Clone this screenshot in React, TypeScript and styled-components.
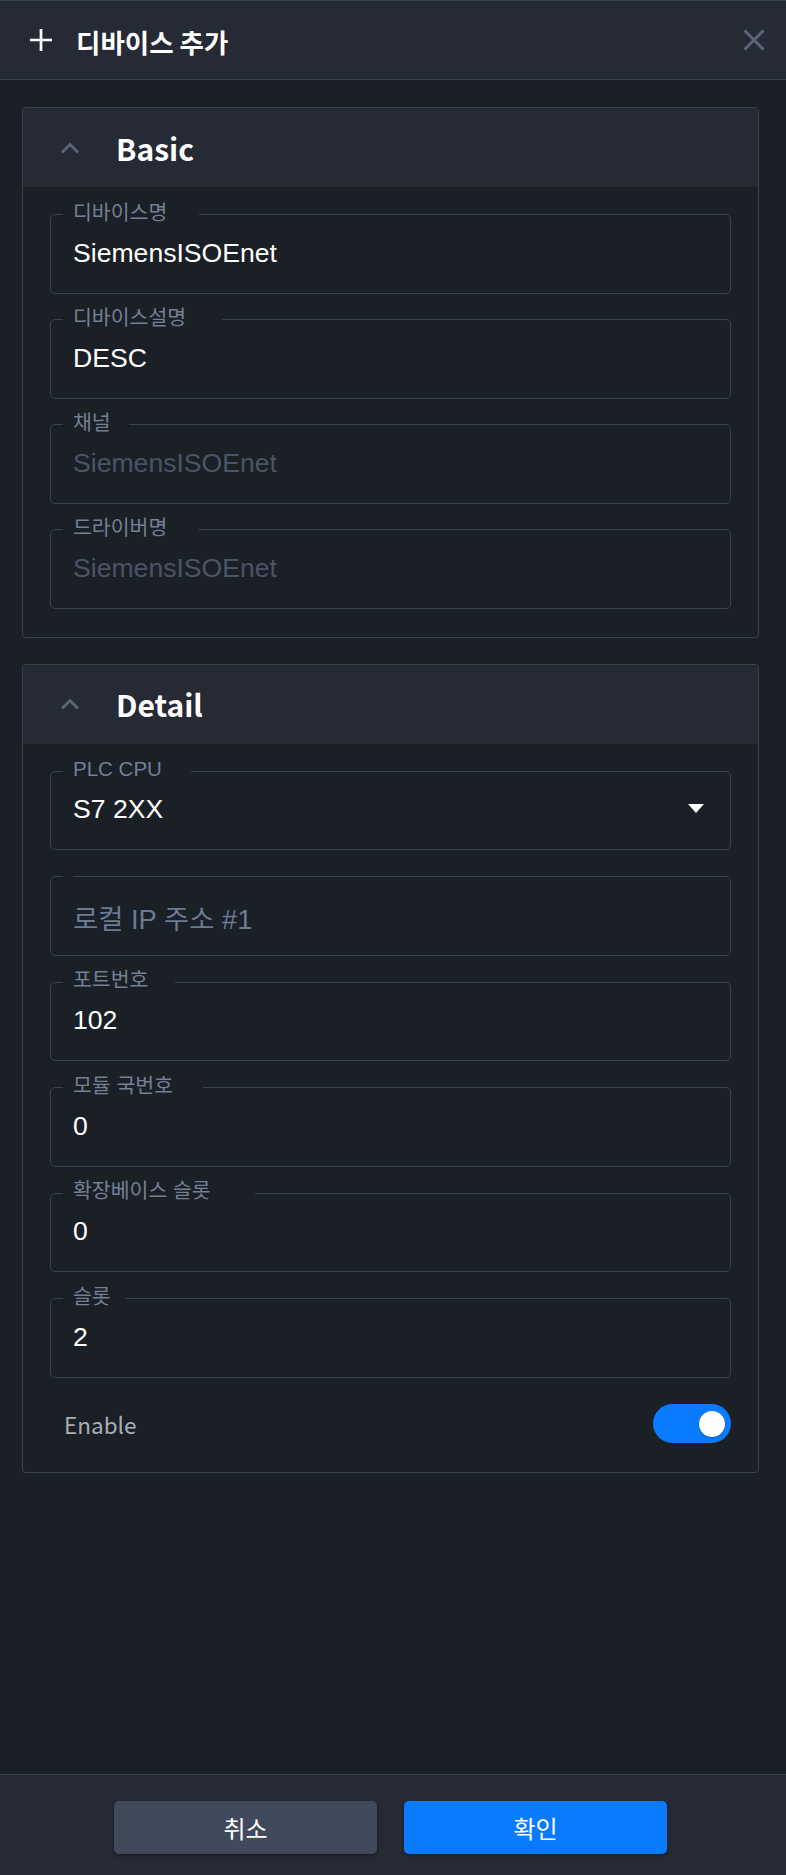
import React from "react";
import styled, { createGlobalStyle } from "styled-components";

const GlobalStyle = createGlobalStyle`
  *, *::before, *::after { box-sizing: border-box; }
  html, body { margin: 0; padding: 0; background: #1b1f26; }
  body { font-family: "Liberation Sans", "Noto Sans CJK KR", sans-serif; }
`;

const Page = styled.div`
  display: flex;
  flex-direction: column;
  min-height: 1875px;
  background: #1b1f26;
`;

const Header = styled.header`
  height: 80px;
  display: flex;
  align-items: center;
  padding: 0 21px 0 30px;
  background: #252a34;
  border-top: 1px solid #3a4150;
  border-bottom: 1px solid #3a4150;
`;

const Title = styled.h1`
  flex: 1;
  margin: 0 0 0 24px;
  font-family: "Noto Sans CJK KR", sans-serif;
  font-size: 26.5px;
  font-weight: 700;
  color: #ffffff;
  line-height: 30px;
  padding-top: 3px;
`;

const IconButton = styled.button`
  display: flex;
  padding: 0;
  border: 0;
  background: transparent;
  color: #5b667a;
  cursor: pointer;
`;

const Main = styled.main`
  flex: 1;
  display: flex;
  flex-direction: column;
  gap: 26px;
  padding: 27px 27px 27px 22px;
`;

const Card = styled.section`
  border: 1px solid #3a4150;
  border-radius: 4px;
  overflow: hidden;
`;

const CardHeader = styled.div`
  height: 79px;
  display: flex;
  align-items: center;
  padding-left: 37px;
  background: #252a34;
`;

const CardTitle = styled.h2`
  margin: 0 0 0 36px;
  font-family: "Noto Sans CJK KR", sans-serif;
  font-size: 30px;
  font-weight: 700;
  color: #ffffff;
  line-height: 36px;
`;

const CardBody = styled.div<{ $gap: number }>`
  display: flex;
  flex-direction: column;
  gap: ${(p) => p.$gap}px;
  padding: 15.5px 27px 28px 27px;
`;

const Field = styled.fieldset`
  margin: 0;
  padding: 0;
  min-width: 0;
  border: 1px solid #3a4150;
  border-radius: 5px;
`;

const Legend = styled.legend<{ $notch: number }>`
  height: 24px;
  margin-left: 12px;
  padding: 0 ${(p) => p.$notch}px 5px 10px;
  font-size: 20.5px;
  line-height: 19px;
  color: #738095;
  white-space: nowrap;
`;

const Value = styled.div<{ $tone: "value" | "disabled" | "placeholder" }>`
  height: 66px;
  display: flex;
  align-items: flex-start;
  justify-content: space-between;
  padding: ${(p) => (p.$tone === "placeholder" ? "16px" : "11px")} 26px 0 22px;
  font-size: ${(p) => (p.$tone === "placeholder" ? "27.4px" : "26.6px")};
  line-height: 30px;
  color: ${(p) =>
    p.$tone === "value" ? "#ffffff" : p.$tone === "disabled" ? "#4a5466" : "#6a7b93"};
`;

const Caret = styled.svg`
  margin-top: 10px;
  flex: none;
`;

const ToggleRow = styled.div`
  height: 40px;
  margin-top: 11.5px;
  display: flex;
  align-items: center;
  justify-content: space-between;
  padding-left: 14px;
`;

const ToggleLabel = styled.span`
  font-family: "Noto Sans CJK KR", sans-serif;
  font-size: 22.5px;
  font-weight: 400;
  color: #a9aeb6;
`;

const Switch = styled.button<{ $on: boolean }>`
  width: 78px;
  height: 39px;
  padding: 0 6px;
  border: 0;
  border-radius: 20px;
  display: flex;
  align-items: center;
  justify-content: ${(p) => (p.$on ? "flex-end" : "flex-start")};
  background: ${(p) => (p.$on ? "#0a7aff" : "#414a5a")};
  cursor: pointer;
`;

const Knob = styled.span`
  width: 26px;
  height: 26px;
  border-radius: 50%;
  background: #ffffff;
  box-shadow: 0 1px 2px rgba(0, 0, 0, 0.3);
`;

const Footer = styled.footer`
  height: 101px;
  display: flex;
  justify-content: center;
  align-items: flex-start;
  gap: 26.5px;
  padding: 26px 5px 0 0;
  background: #252a34;
  border-top: 1px solid #3a4150;
`;

const Button = styled.button<{ $primary?: boolean }>`
  width: 263.5px;
  height: 52.5px;
  border: 0;
  border-radius: 5px;
  font-family: "Noto Sans CJK KR", sans-serif;
  font-size: 24px;
  font-weight: 400;
  color: #ffffff;
  background: ${(p) => (p.$primary ? "#0a7aff" : "#414a5a")};
  box-shadow: 0 2px 4px rgba(0, 0, 0, 0.3);
  cursor: pointer;
`;

type FieldDef = {
  label?: string;
  value: string;
  notch?: number;
  tone?: "value" | "disabled" | "placeholder";
  select?: boolean;
};

const basicFields: FieldDef[] = [
  { label: "디바이스명", value: "SiemensISOEnet", notch: 32 },
  { label: "디바이스설명", value: "DESC", notch: 36 },
  { label: "채널", value: "SiemensISOEnet", notch: 18, tone: "disabled" },
  { label: "드라이버명", value: "SiemensISOEnet", notch: 31, tone: "disabled" },
];

const detailFields: FieldDef[] = [
  { label: "PLC CPU", value: "S7 2XX", notch: 29, select: true },
  { value: "로컬 IP 주소 #1", tone: "placeholder" },
  { label: "포트번호", value: "102", notch: 27 },
  { label: "모듈 국번호", value: "0", notch: 30 },
  { label: "확장베이스 슬롯", value: "0", notch: 44 },
  { label: "슬롯", value: "2", notch: 14 },
];

const Chevron = () => (
  <svg width="20" height="12" viewBox="0 0 20 12" fill="none">
    <polyline points="2,10.5 10,2.5 18,10.5" stroke="#5a6475" strokeWidth="3" />
  </svg>
);

const OutlinedField = ({ f }: { f: FieldDef }) => (
  <Field>
    <Legend $notch={f.label ? f.notch ?? 20 : 0}>{f.label ?? ""}</Legend>
    <Value $tone={f.tone ?? "value"}>
      <span>{f.value}</span>
      {f.select && (
        <Caret width="16" height="9" viewBox="0 0 16 9">
          <polygon points="0,0 16,0 8,9" fill="#ffffff" />
        </Caret>
      )}
    </Value>
  </Field>
);

export default function App() {
  return (
    <Page>
      <GlobalStyle />
      <Header>
        <svg width="22" height="22" viewBox="0 0 22 22">
          <path d="M11 0V22M0 11H22" stroke="#ffffff" strokeWidth="2.7" />
        </svg>
        <Title>디바이스 추가</Title>
        <IconButton aria-label="close">
          <svg width="22" height="22" viewBox="0 0 22 22">
            <path d="M1.5 1.5L20.5 20.5M20.5 1.5L1.5 20.5" stroke="currentColor" strokeWidth="3" />
          </svg>
        </IconButton>
      </Header>
      <Main>
        <Card>
          <CardHeader>
            <Chevron />
            <CardTitle>Basic</CardTitle>
          </CardHeader>
          <CardBody $gap={14}>
            {basicFields.map((f) => (
              <OutlinedField key={f.label} f={f} />
            ))}
          </CardBody>
        </Card>
        <Card>
          <CardHeader>
            <Chevron />
            <CardTitle>Detail</CardTitle>
          </CardHeader>
          <CardBody $gap={14.5}>
            {detailFields.map((f) => (
              <OutlinedField key={f.value + (f.label ?? "")} f={f} />
            ))}
            <ToggleRow>
              <ToggleLabel>Enable</ToggleLabel>
              <Switch $on aria-label="Enable">
                <Knob />
              </Switch>
            </ToggleRow>
          </CardBody>
        </Card>
      </Main>
      <Footer>
        <Button>취소</Button>
        <Button $primary>확인</Button>
      </Footer>
    </Page>
  );
}
